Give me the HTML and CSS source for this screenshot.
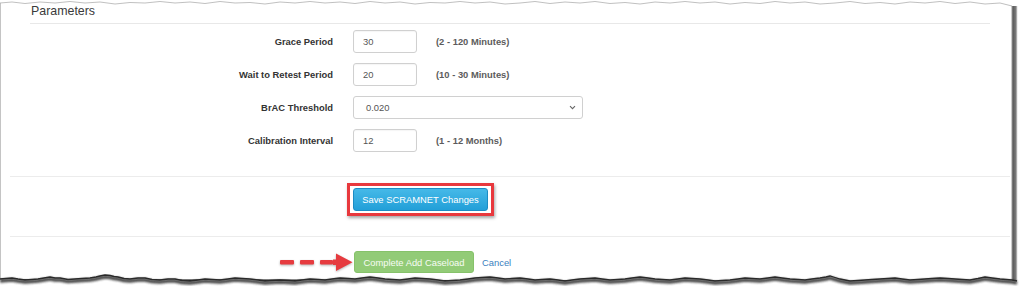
FILE: index.html
```html
<!DOCTYPE html>
<html lang="en">
<head>
<meta charset="utf-8">
<title>Parameters</title>
<link rel="stylesheet" href="styles.css">
</head>
<body>
<div class="sheet">
  <h3 class="heading">Parameters</h3>
  <form class="form">
    <div class="row">
      <label class="label">Grace Period</label>
      <div class="field"><input class="input" type="text" value="30"><span class="help">(2 - 120 Minutes)</span></div>
    </div>
    <div class="row">
      <label class="label">Wait to Retest Period</label>
      <div class="field"><input class="input" type="text" value="20"><span class="help">(10 - 30 Minutes)</span></div>
    </div>
    <div class="row">
      <label class="label">BrAC Threshold</label>
      <div class="field">
        <div class="select"><span>0.020</span>
          <svg class="chev" width="7" height="5" viewBox="0 0 7 5"><path d="M1 1.2 L3.5 3.7 L6 1.2" fill="none" stroke="#666" stroke-width="1.1"/></svg>
        </div>
      </div>
    </div>
    <div class="row">
      <label class="label">Calibration Interval</label>
      <div class="field"><input class="input" type="text" value="12"><span class="help">(1 - 12 Months)</span></div>
    </div>
  </form>
  <div class="save-section">
    <div class="highlight"><button class="btn btn-blue" type="button">Save SCRAMNET Changes</button></div>
  </div>
  <div class="footer">
    <svg class="arrow" width="73" height="20" viewBox="0 0 73 20">
      <g fill="#e63b3f">
        <rect x="0" y="8" width="14" height="4.5" rx="1"/>
        <rect x="20" y="8" width="14" height="4.5" rx="1"/>
        <rect x="40" y="8" width="13" height="4.5" rx="1"/>
        <path d="M53 7.5 L56 7.5 L56 1.5 L72.5 10.2 L56 19 L56 13 L53 13 Z"/>
      </g>
    </svg>
    <button class="btn btn-green" type="button">Complete Add Caseload</button>
    <a class="cancel" href="#">Cancel</a>
  </div>
</div>
<svg class="edges" width="1024" height="294" viewBox="0 0 1024 294">
  <defs>
    <filter id="blur" x="-5%" y="-50%" width="110%" height="200%"><feGaussianBlur stdDeviation="1.3"/></filter>
    <linearGradient id="rs" x1="0" x2="1" y1="0" y2="0">
      <stop offset="0" stop-color="#9a9a9a"/>
      <stop offset="0.3" stop-color="#5e5e5e"/>
      <stop offset="0.7" stop-color="#7a7a7a"/>
      <stop offset="1" stop-color="#e0e0e0"/>
    </linearGradient>
  </defs>
  <path d="M0 0 L1024 0 L1024 6 L1012 6 L1000 3 L985 4 L970 2 L955 3.5 L940 1.5 L925 3 L910 2 L895 4 L880 2.5 L865 3.5 L850 1.5 L835 3 L820 4 L805 2 L790 3 L775 1.5 L760 3.5 L745 2.5 L730 4 L715 2 L700 3 L685 1.5 L670 3 L655 2 L640 4 L625 2.5 L610 3.5 L595 1.5 L580 3 L565 2 L550 3.5 L535 1.5 L520 3 L505 4 L490 2 L475 3 L460 1.5 L445 3 L430 2.5 L415 4 L400 2 L385 3 L370 1.5 L355 3.5 L340 2 L325 3 L310 1.5 L295 3 L280 2 L265 4 L250 2.5 L235 3 L220 1.5 L205 3.5 L190 2 L175 3 L160 1.5 L145 3 L130 2.5 L115 4 L100 2 L85 3 L70 1.5 L55 3 L40 2 L25 3.5 L12 2 L0 3 Z" fill="#fff"/>
  <path d="M1012 6 L1000 3 L985 4 L970 2 L955 3.5 L940 1.5 L925 3 L910 2 L895 4 L880 2.5 L865 3.5 L850 1.5 L835 3 L820 4 L805 2 L790 3 L775 1.5 L760 3.5 L745 2.5 L730 4 L715 2 L700 3 L685 1.5 L670 3 L655 2 L640 4 L625 2.5 L610 3.5 L595 1.5 L580 3 L565 2 L550 3.5 L535 1.5 L520 3 L505 4 L490 2 L475 3 L460 1.5 L445 3 L430 2.5 L415 4 L400 2 L385 3 L370 1.5 L355 3.5 L340 2 L325 3 L310 1.5 L295 3 L280 2 L265 4 L250 2.5 L235 3 L220 1.5 L205 3.5 L190 2 L175 3 L160 1.5 L145 3 L130 2.5 L115 4 L100 2 L85 3 L70 1.5 L55 3 L40 2 L25 3.5 L12 2 L0 3" fill="none" stroke="#b0b0b0" stroke-width="0.8"/>
  <rect x="1012" y="0" width="12" height="294" fill="#fff"/>
  <rect x="1011.5" y="6" width="6" height="276" fill="url(#rs)"/>
  <path id="bottom" d="M0 279 L6 278.5 L12 278 L18 279 L25 280 L32 279.5 L38 279 L44 278 L50 277 L55 278 L60 278 L68 279.5 L75 279 L82 278.5 L90 278 L96 277 L100 276 L105 275 L110 275.5 L114 276.5 L118 277 L124 278.5 L130 279 L138 278 L145 278 L152 279.5 L160 280 L168 279 L175 279 L182 280.5 L190 281 L198 280 L205 279 L212 279.5 L220 280 L228 279 L235 278 L242 278.5 L250 279 L258 280 L265 281 L272 280.5 L280 280 L288 280.5 L295 281 L302 280 L310 279 L318 279.5 L325 280 L332 279 L340 278 L348 278.5 L355 279 L362 278 L370 277 L378 278 L385 279 L392 279.5 L400 280 L408 279 L415 278 L422 278.5 L430 279 L438 280 L445 281 L452 280.5 L460 280 L468 279 L475 278 L482 277.5 L490 277 L498 278 L505 279 L512 278.5 L520 278 L528 279 L535 280 L542 279.5 L550 279 L558 280 L565 281 L572 280 L580 279 L588 278.5 L595 278 L602 279 L610 280 L618 279.5 L625 279 L632 278 L640 277 L648 278 L655 279 L662 279.5 L670 280 L678 279 L685 278 L692 278.5 L700 279 L708 280 L715 281 L722 280.5 L730 280 L738 279 L745 278 L752 278.5 L760 279 L768 278 L775 277 L782 278 L790 279 L798 279.5 L805 280 L812 279 L820 278 L826 277 L830 276 L835 277.5 L840 279 L845 280 L850 281 L858 280.5 L865 280 L872 279.5 L880 279 L888 278.5 L895 278 L902 279 L910 280 L918 279.5 L925 279 L932 278.5 L940 278 L948 278.5 L955 279 L962 279.5 L970 280 L978 278.5 L985 277 L992 278 L1000 279 L1006 279.5 L1012 280 L1017 281"/>
  <path d="M0 279 L6 278.5 L12 278 L18 279 L25 280 L32 279.5 L38 279 L44 278 L50 277 L55 278 L60 278 L68 279.5 L75 279 L82 278.5 L90 278 L96 277 L100 276 L105 275 L110 275.5 L114 276.5 L118 277 L124 278.5 L130 279 L138 278 L145 278 L152 279.5 L160 280 L168 279 L175 279 L182 280.5 L190 281 L198 280 L205 279 L212 279.5 L220 280 L228 279 L235 278 L242 278.5 L250 279 L258 280 L265 281 L272 280.5 L280 280 L288 280.5 L295 281 L302 280 L310 279 L318 279.5 L325 280 L332 279 L340 278 L348 278.5 L355 279 L362 278 L370 277 L378 278 L385 279 L392 279.5 L400 280 L408 279 L415 278 L422 278.5 L430 279 L438 280 L445 281 L452 280.5 L460 280 L468 279 L475 278 L482 277.5 L490 277 L498 278 L505 279 L512 278.5 L520 278 L528 279 L535 280 L542 279.5 L550 279 L558 280 L565 281 L572 280 L580 279 L588 278.5 L595 278 L602 279 L610 280 L618 279.5 L625 279 L632 278 L640 277 L648 278 L655 279 L662 279.5 L670 280 L678 279 L685 278 L692 278.5 L700 279 L708 280 L715 281 L722 280.5 L730 280 L738 279 L745 278 L752 278.5 L760 279 L768 278 L775 277 L782 278 L790 279 L798 279.5 L805 280 L812 279 L820 278 L826 277 L830 276 L835 277.5 L840 279 L845 280 L850 281 L858 280.5 L865 280 L872 279.5 L880 279 L888 278.5 L895 278 L902 279 L910 280 L918 279.5 L925 279 L932 278.5 L940 278 L948 278.5 L955 279 L962 279.5 L970 280 L978 278.5 L985 277 L992 278 L1000 279 L1006 279.5 L1012 280 L1017 281 L1024 281 L1024 294 L0 294 Z" fill="#fff"/>
  <use href="#bottom" fill="none" stroke="#3a3a3a" stroke-width="3.4" transform="translate(0 2)" filter="url(#blur)" opacity="0.95"/>
  <use href="#bottom" fill="none" stroke="#2a2a2a" stroke-width="1.3"/>
</svg>
</body>
</html>
```

FILE: styles.css
```css
* { box-sizing: border-box; }
html, body { margin: 0; padding: 0; background: #fff; }
body {
  width: 1024px;
  height: 294px;
  overflow: hidden;
  position: relative;
  font-family: "Liberation Sans", Arial, sans-serif;
  color: #333;
}
.sheet {
  width: 1012px;
  height: 294px;
  border-left: 1px solid #c4c4c4;
  display: flex;
  flex-direction: column;
}
.heading {
  margin: 0 22px 0 29px;
  padding: 3px 0 3px 1px;
  font-size: 12.4px;
  line-height: 17px;
  font-weight: normal;
  color: #3a3a3a;
  border-bottom: 1px solid #e8e8e8;
}
.form {
  margin: 0 2px 0 9px;
  padding: 6px 0 24px 0;
  display: flex;
  flex-direction: column;
  gap: 10px;
  border-bottom: 1px solid #ececec;
}
.row {
  display: grid;
  grid-template-columns: 323px 1fr;
  column-gap: 20px;
  align-items: center;
  height: 23px;
}
.label {
  text-align: right;
  font-weight: bold;
  font-size: 9.4px;
  color: #333;
}
.field {
  display: flex;
  align-items: center;
  gap: 19px;
}
.input {
  width: 64px;
  height: 23px;
  border: 1px solid #d0d0d0;
  border-radius: 3px;
  padding: 0 9px;
  font-family: "Liberation Sans", Arial, sans-serif;
  font-size: 9.4px;
  color: #555;
  background: #fff;
  box-shadow: inset 0 1px 1px rgba(0,0,0,0.04);
}
.help {
  font-weight: bold;
  font-size: 9.4px;
  color: #5c5c5c;
}
.select {
  width: 230px;
  height: 23px;
  border: 1px solid #d0d0d0;
  border-radius: 3px;
  padding: 0 6px 0 12px;
  display: flex;
  align-items: center;
  justify-content: space-between;
  font-size: 9.4px;
  color: #555;
  background: #fff;
}
.chev { display: block; }
.save-section {
  margin: 0 2px 0 9px;
  padding: 6px 0 20px 337px;
  border-bottom: 1px solid #ececec;
  display: flex;
}
.highlight {
  border: 3px solid #e8383d;
  padding: 2px 3px;
  box-shadow: 1px 2px 3px rgba(0,0,0,0.35);
  display: flex;
}
.btn {
  font-family: "Liberation Sans", Arial, sans-serif;
  font-size: 9.4px;
  border-radius: 3px;
  cursor: pointer;
}
.btn-blue {
  width: 135px;
  height: 23px;
  color: #fff;
  border: 1px solid #1b8cc4;
  background: linear-gradient(#45b9e8, #229fd8);
  padding: 0;
}
.footer {
  padding: 14px 0 0 279px;
  display: flex;
  align-items: center;
}
.arrow {
  display: block;
  filter: drop-shadow(0.5px 1px 0.8px rgba(0,0,0,0.3));
}
.btn-green {
  margin-left: 1px;
  width: 120px;
  height: 22px;
  color: #f7fbf4;
  border: 1px solid #86c26a;
  background: #92cb77;
  padding: 0;
}
.cancel {
  margin-left: 8px;
  font-size: 9.4px;
  color: #3a7fc0;
  text-decoration: none;
}
.edges {
  position: absolute;
  top: 0;
  left: 0;
  pointer-events: none;
}
```
